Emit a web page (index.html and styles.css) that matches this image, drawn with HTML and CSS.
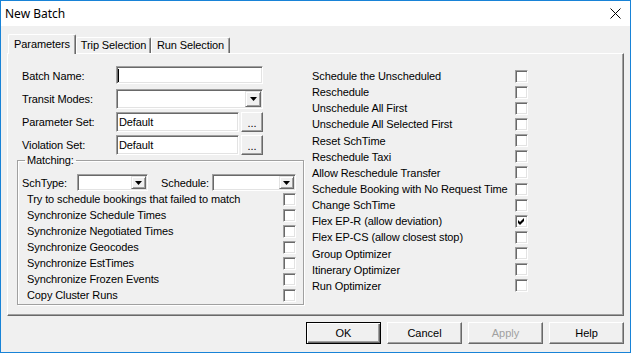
FILE: index.html
```html
<!DOCTYPE html>
<html lang="en">
<head>
  <meta charset="UTF-8">
  <title>New Batch</title>
  <link rel="stylesheet" href="styles.css">
</head>
<body>
  <div class="window">
    <div class="titlebar">
      <span class="caption">New Batch</span>
      <svg class="close" width="11" height="11" viewBox="0 0 11 11"><path d="M0.5 0.5 L10.5 10.5 M10.5 0.5 L0.5 10.5" stroke="#000" stroke-width="1" fill="none"/></svg>
    </div>
    <div class="client">
      <div class="tabs">
        <div class="tab active">Parameters</div>
        <div class="tab trip">Trip Selection</div>
        <div class="tab run">Run Selection</div>
      </div>
      <div class="panel">
        <div class="left">
          <div class="fields">
            <label>Batch Name:</label>
            <div class="edit short"><span class="caret"></span></div>
            <label>Transit Modes:</label>
            <div class="combo"><span class="drop"><svg width="7" height="4" viewBox="0 0 7 4"><polygon points="0,0 7,0 3.5,4" fill="#000"/></svg></span></div>
            <label>Parameter Set:</label>
            <div class="pick"><div class="edit">Default</div><button class="dots">...</button></div>
            <label>Violation Set:</label>
            <div class="pick"><div class="edit">Default</div><button class="dots">...</button></div>
          </div>
          <fieldset class="group">
            <legend>Matching:</legend>
            <div class="sch">
              <label class="sch-type">SchType:</label>
              <div class="combo small type"><span class="drop"><svg width="7" height="4" viewBox="0 0 7 4"><polygon points="0,0 7,0 3.5,4" fill="#000"/></svg></span></div>
              <label class="sch-name">Schedule:</label>
              <div class="combo small name"><span class="drop"><svg width="7" height="4" viewBox="0 0 7 4"><polygon points="0,0 7,0 3.5,4" fill="#000"/></svg></span></div>
            </div>
            <div class="checks">
              <span>Try to schedule bookings that failed to match</span><i class="box"></i>
              <span>Synchronize Schedule Times</span><i class="box"></i>
              <span>Synchronize Negotiated Times</span><i class="box"></i>
              <span>Synchronize Geocodes</span><i class="box"></i>
              <span>Synchronize EstTimes</span><i class="box"></i>
              <span>Synchronize Frozen Events</span><i class="box"></i>
              <span>Copy Cluster Runs</span><i class="box"></i>
            </div>
          </fieldset>
        </div>
        <div class="right">
          <span>Schedule the Unscheduled</span><i class="box"></i>
          <span>Reschedule</span><i class="box"></i>
          <span>Unschedule All First</span><i class="box"></i>
          <span>Unschedule All Selected First</span><i class="box"></i>
          <span>Reset SchTime</span><i class="box"></i>
          <span>Reschedule Taxi</span><i class="box"></i>
          <span>Allow Reschedule Transfer</span><i class="box"></i>
          <span>Schedule Booking with No Request Time</span><i class="box"></i>
          <span>Change SchTime</span><i class="box"></i>
          <span>Flex EP-R (allow deviation)</span><i class="box"><svg width="11" height="11" viewBox="0 0 11 11"><polygon points="2,4 4,6 8,2 8,5 4,9 2,7" fill="#000"/></svg></i>
          <span>Flex EP-CS (allow closest stop)</span><i class="box"></i>
          <span>Group Optimizer</span><i class="box"></i>
          <span>Itinerary Optimizer</span><i class="box"></i>
          <span>Run Optimizer</span><i class="box"></i>
        </div>
      </div>
      <div class="buttons">
        <button class="btn default">OK</button>
        <button class="btn">Cancel</button>
        <button class="btn" disabled>Apply</button>
        <button class="btn">Help</button>
      </div>
    </div>
  </div>
</body>
</html>
```

FILE: styles.css
```css
* {
  box-sizing: border-box;
}
body {
  margin: 0;
  font: 11px "Liberation Sans", Arial, sans-serif;
  letter-spacing: -0.1px;
  color: #000;
}
.window {
  width: 631px;
  height: 353px;
  border: 1px solid #1883d7;
  background: #f0f0f0;
  display: flex;
  flex-direction: column;
}
.titlebar {
  height: 25px;
  flex: none;
  background: #fff;
  display: flex;
  align-items: center;
  justify-content: space-between;
  padding: 0 9px 0 4px;
  font: 12px "Noto Sans", "Liberation Sans", sans-serif;
  letter-spacing: 0;
}
.close {
  display: block;
}
.client {
  flex: 1;
  padding: 0 6px;
}
.tabs {
  height: 27px;
  display: flex;
  align-items: flex-end;
  padding-left: 1px;
}
.tab {
  height: 16px;
  line-height: 15px;
  text-align: center;
  border-top: 1px solid #fff;
  border-left: 1px solid #fff;
  border-right: 1px solid #696969;
  border-radius: 2px 2px 0 0;
  box-shadow: inset -1px 0 0 #a0a0a0;
}
.tab.active {
  width: 68px;
  height: 20px;
  line-height: 19px;
  margin-bottom: -1px;
  position: relative;
  z-index: 1;
  background: #f0f0f0;
}
.tab.trip {
  width: 75px;
}
.tab.run {
  width: 79px;
}
.panel {
  width: 617px;
  height: 263px;
  border: 1px solid;
  border-color: #fff #696969 #696969 #fff;
  box-shadow: inset -1px -1px 0 #a0a0a0;
  display: flex;
  align-items: flex-start;
  padding: 12px 0 0 9px;
}
.left {
  width: 287px;
  flex: none;
}
.fields {
  display: grid;
  grid-template-columns: 94px 147px;
  grid-auto-rows: 20px;
  row-gap: 3px;
  align-items: center;
  padding-left: 5px;
}
.edit,
.combo {
  height: 20px;
  background: #fff;
  border: 1px solid;
  border-color: #a0a0a0 #fff #fff #a0a0a0;
  box-shadow: inset 1px 1px 0 #696969, inset -1px -1px 0 #e3e3e3;
  display: flex;
  align-items: center;
  padding: 0 2px;
}
.edit.short {
  height: 18px;
  align-self: start;
  padding-left: 1px;
}
.caret {
  width: 1px;
  height: 13px;
  background: #000;
}
.combo {
  justify-content: flex-end;
  padding: 1px;
}
.drop {
  width: 16px;
  height: 100%;
  display: flex;
  align-items: center;
  justify-content: center;
  background: #f0f0f0;
  border: 1px solid;
  border-color: #e3e3e3 #696969 #696969 #e3e3e3;
  box-shadow: inset 1px 1px 0 #fff, inset -1px -1px 0 #a0a0a0;
}
.drop svg {
  display: block;
}
.pick {
  display: flex;
  gap: 2px;
}
.pick .edit {
  width: 123px;
}
.dots {
  width: 22px;
  height: 20px;
  padding: 2px 0 0;
  font: 11px "Liberation Sans", Arial, sans-serif;
  background: #f0f0f0;
  border: 1px solid;
  border-color: #fff #696969 #696969 #fff;
  box-shadow: inset -1px -1px 0 #a0a0a0;
}
.group {
  width: 287px;
  margin: -1px 0 0;
  padding: 0 7px 1px 0;
  border: 1px solid #a0a0a0;
  box-shadow: inset 1px 1px 0 #fff, 1px 1px 0 #fff;
  min-width: 0;
}
.group legend {
  margin-left: 7px;
  padding: 0 2px;
  line-height: 12px;
}
.sch {
  display: flex;
  align-items: center;
  margin-top: 8px;
  padding-left: 4px;
}
.sch-type {
  width: 55px;
}
.sch-name {
  width: 51px;
  margin-left: 13px;
}
.combo.small {
  height: 17px;
}
.combo.small .drop {
  width: 15px;
}
.combo.type {
  width: 71px;
}
.combo.name {
  width: 84px;
}
.checks {
  display: grid;
  grid-template-columns: 1fr 13px;
  grid-auto-rows: 16px;
  align-items: center;
  margin-top: 0;
  padding-left: 9px;
}
.box {
  width: 13px;
  height: 13px;
  background: #fff;
  border: 1px solid;
  border-color: #a0a0a0 #fff #fff #a0a0a0;
  box-shadow: inset 1px 1px 0 #696969, inset -1px -1px 0 #e3e3e3;
}
.box svg {
  display: block;
}
.right {
  width: 216px;
  height: 226px;
  margin: 2px 0 0 8px;
  display: grid;
  grid-template-columns: 1fr 13px;
  grid-template-rows: repeat(14, 1fr);
  align-items: center;
}
.buttons {
  display: flex;
  justify-content: flex-end;
  gap: 6px;
  margin-top: 6px;
}
.btn {
  width: 75px;
  height: 22px;
  padding: 0;
  font: 11px "Liberation Sans", Arial, sans-serif;
  color: #000;
  background: #f0f0f0;
  border: 1px solid;
  border-color: #fff #696969 #696969 #fff;
  box-shadow: inset -1px -1px 0 #a0a0a0;
}
.btn.default {
  border-color: #000;
  box-shadow: inset 1px 1px 0 #fff, inset -1px -1px 0 #696969, inset -2px -2px 0 #a0a0a0;
}
.btn:disabled {
  color: #a0a0a0;
}
```
